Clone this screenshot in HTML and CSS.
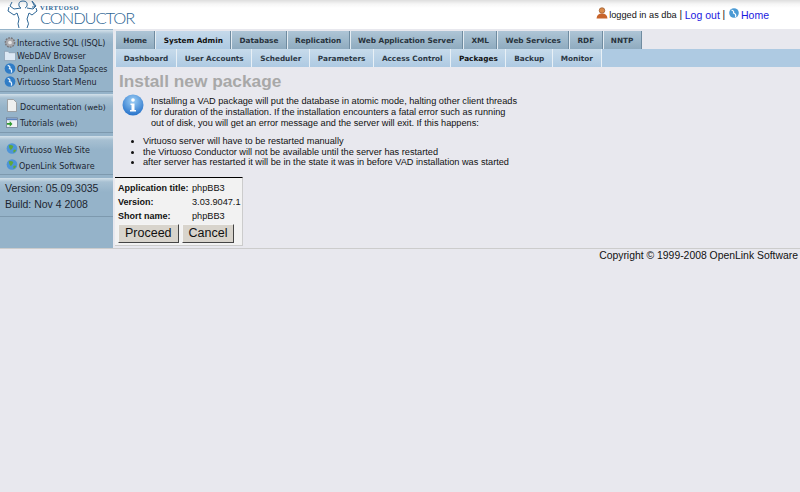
FILE: index.html
```html
<!DOCTYPE html>
<html lang="en">
<head>
<meta charset="utf-8">
<title>Virtuoso Conductor</title>
<link rel="stylesheet" href="styles.css">
</head>
<body>
<header class="top">
  <div class="logo">
    <svg class="logo-man" width="32" height="29" viewBox="0 0 32 29"><g fill="none" stroke="#2f6796" stroke-width="1"><path d="M12 6 Q11 1 16 1 Q21 1 20 6 Q19 8 18 8"/><path d="M12 6 Q13 8 14 8 L7 9 L3 6 L5 2"/><path d="M20 8 L26 9 L29 6 L25 1 L28 7 L25 7"/><path d="M2 7 L1 11 L7 15 L10 13 L12 19 Q10 24 12 28"/><path d="M29 8 L30 11 L25 15 L22 13 L20 19 Q23 24 20 28"/></g></svg>
    <div class="logo-text"><span class="logo-small">VIRTUOSO</span><span class="logo-big">CONDUCTOR</span></div>
  </div>
  <div class="user">
    <svg class="ico-user" width="12" height="12" viewBox="0 0 12 12"><circle cx="6" cy="3.5" r="2.8" fill="#d98a4a" stroke="#8a4a1e" stroke-width=".6"/><path d="M0.5 11.500 Q1 6.500 6 6.500 Q11 6.500 11.500 11.500Z" fill="#c8642a"/></svg>
    <span class="user-text">logged in as dba</span><span class="sep"> | </span><a href="#">Log out</a><span class="sep"> | </span>
    <svg class="ico-home" width="12" height="11" viewBox="0 0 12 11"><circle cx="6" cy="5" r="4.800" fill="#4a9ad4"/><path d="M3.500 2 Q6.500 3 5.500 5 Q8.500 6 7.500 9" stroke="#fff" stroke-width="1.200" fill="none"/></svg>
    <a href="#">Home</a>
  </div>
</header>
<div class="frame">
  <nav class="side">
    <section class="side-box box-apps">
      <a class="side-link"><svg class="i" width="12" height="13" viewBox="0 0 13 13"><circle cx="6.500" cy="6.500" r="5" fill="#a9a9ad" stroke="#77777c" stroke-width="1.600" stroke-dasharray="2 1"/><circle cx="6.500" cy="6.500" r="2" fill="#e6e6e6"/></svg>Interactive SQL (ISQL)</a>
      <a class="side-link"><svg class="i" width="12" height="13" viewBox="0 0 13 13"><path d="M0.500 2h4l1 1.500h7V12H0.500z" fill="#dce8f4" stroke="#7f93a8" stroke-width=".7"/></svg>WebDAV Browser</a>
      <a class="side-link"><svg class="i" width="12" height="13" viewBox="0 0 13 13"><circle cx="6.500" cy="6.500" r="5.800" fill="#2f7cc6"/><path d="M4 3 Q7.500 4 6 6.500 Q9 7 8 11" stroke="#e8f4ff" stroke-width="1.400" fill="none"/></svg>OpenLink Data Spaces</a>
      <a class="side-link"><svg class="i" width="12" height="13" viewBox="0 0 13 13"><circle cx="6.500" cy="6.500" r="5.800" fill="#2f7cc6"/><path d="M4 3 Q7.500 4 6 6.500 Q9 7 8 11" stroke="#e8f4ff" stroke-width="1.400" fill="none"/></svg>Virtuoso Start Menu</a>
    </section>
    <section class="side-box box-docs">
      <a class="side-link wide"><svg class="i" width="12" height="13" viewBox="0 0 12 13"><path d="M1.500 0.500h6l3 3V12.500h-9z" fill="#eef0f0" stroke="#8a8a8a" stroke-width=".7"/></svg>Documentation&nbsp;<small>(web)</small></a>
      <a class="side-link wide"><svg class="i" width="12" height="13" viewBox="0 0 13 13"><rect x=".5" y="1.500" width="12" height="10.500" fill="#eef0f4" stroke="#5a6a80" stroke-width=".7"/><path d="M1 2h11v2H1z" fill="#5e84c0"/><path d="M1 7h3V5l3 3-3 3V9H1z" fill="#2f9a30"/></svg>Tutorials&nbsp;<small>(web)</small></a>
    </section>
    <section class="side-box box-sites">
      <a class="side-link"><svg class="i" width="12" height="13" viewBox="0 0 13 13"><circle cx="6.500" cy="6.500" r="5.800" fill="#4d94d8"/><path d="M3 3 Q6 2 8 4 Q7 7 5 8 Q3 6 3 3z M8 8 Q10 7 11 8 Q10 11 8 11z" fill="#5fa83c"/></svg>Virtuoso Web Site</a>
      <a class="side-link"><svg class="i" width="12" height="13" viewBox="0 0 13 13"><circle cx="6.500" cy="6.500" r="5.800" fill="#4d94d8"/><path d="M3 3 Q6 2 8 4 Q7 7 5 8 Q3 6 3 3z M8 8 Q10 7 11 8 Q10 11 8 11z" fill="#5fa83c"/></svg>OpenLink Software</a>
    </section>
    <section class="side-box box-ver">
      <div>Version: 05.09.3035</div>
      <div>Build: Nov 4 2008</div>
    </section>
  </nav>
  <main class="main">
    <div class="tabs">
      <a class="tab">Home</a><a class="tab on">System Admin</a><a class="tab">Database</a><a class="tab">Replication</a><a class="tab">Web Application Server</a><a class="tab">XML</a><a class="tab">Web Services</a><a class="tab">RDF</a><a class="tab">NNTP</a>
    </div>
    <div class="subs">
      <a class="sub">Dashboard</a><a class="sub">User Accounts</a><a class="sub">Scheduler</a><a class="sub">Parameters</a><a class="sub">Access Control</a><a class="sub on">Packages</a><a class="sub">Backup</a><a class="sub last">Monitor</a>
    </div>
    <div class="content">
      <h1>Install new package</h1>
      <div class="notice">
        <svg class="info" width="22" height="22" viewBox="0 0 22 22"><defs><radialGradient id="g" cx=".5" cy=".3" r=".8"><stop offset="0" stop-color="#9fd0f6"/><stop offset="1" stop-color="#1565c4"/></radialGradient></defs><circle cx="11" cy="11" r="10.500" fill="url(#g)"/><circle cx="11" cy="6" r="1.800" fill="#fff"/><path d="M8.500 9.500h4V16h1.500v1.500H8V16h1.500V11H8.500z" fill="#fff"/></svg>
        <p>Installing a VAD package will put the database in atomic mode, halting other client threads<br>for duration of the installation. If the installation encounters a fatal error such as running<br>out of disk, you will get an error message and the server will exit. If this happens:</p>
      </div>
      <ul class="points">
        <li>Virtuoso server will have to be restarted manually</li>
        <li>the Virtuoso Conductor will not be available until the server has restarted</li>
        <li>after server has restarted it will be in the state it was in before VAD installation was started</li>
      </ul>
      <div class="confirm">
        <div class="row"><b>Application title:</b><span>phpBB3</span></div>
        <div class="row"><b>Version:</b><span>3.03.9047.1</span></div>
        <div class="row"><b>Short name:</b><span>phpBB3</span></div>
        <div class="btns"><button class="btn" type="button">Proceed</button><button class="btn" type="button">Cancel</button></div>
      </div>
    </div>
  </main>
</div>
<footer class="foot">Copyright © 1999-2008 OpenLink Software</footer>
</body>
</html>
```
FILE: styles.css
```css
html, body { margin: 0; padding: 0; }
body { background: #e8e8ee; font-family: "Liberation Sans", Arial, sans-serif; font-size: 10px; color: #111; width: 800px; height: 492px; overflow: hidden; }
a { color: inherit; text-decoration: none; }
.top { height: 29px; background: linear-gradient(#dedede 0, #f6f6f6 4px, #fff 8px); display: flex; justify-content: space-between; align-items: flex-start; box-sizing: border-box; }
.logo { display: flex; padding-left: 7px; color: #2f6796; }
.logo-text { display: flex; flex-direction: column; margin-left: 1px; padding-top: 4px; }
.logo-small { font: bold 6.500px/7px "Liberation Serif", serif; letter-spacing: .6px; height: 7px; }
.logo-big { font: 300 16.500px/14px "Lato", sans-serif; letter-spacing: -1.100px; }
.user { display: flex; align-items: center; padding: 9px 31px 0 0; font-size: 10.500px; line-height: 12px; white-space: pre; }
.user a { color: #1a1ae0; }
.user-text { font-size: 9.200px; }
.sep { font-size: 10px; }
.ico-user { margin-right: 1px; margin-top: -4px; }
.ico-home { margin-right: 1px; margin-top: -4px; }
.frame { display: flex; height: 219px; }
.side { width: 113px; background: #95b3c9; flex: none; margin-right: 2px; padding-top: 1px; box-sizing: border-box; }
.side-box { border-bottom: 1px solid #7d99ae; box-sizing: border-box; background: linear-gradient(#d3e1ea, #a7c0d2 4px, #95b3c9 14px); font: 8px/13px "DejaVu Sans", Verdana, sans-serif; color: #1c2530; white-space: nowrap; }
.side-link { display: flex; align-items: center; height: 13px; }
.i { flex: none; margin-right: 1px; margin-top: -3px; }
.box-apps { height: 62px; padding: 7px 0 0 4px; }
.box-docs { height: 39px; padding: 5px 0 0 6px; margin-top: 2px; }
.wide { height: 16.500px; }
.wide .i { margin-right: 2px; }
small { font-size: 7.500px; }
.box-sites { height: 39px; padding: 6px 0 0 6px; margin-top: 3px; }
.box-sites .side-link { height: 16px; }
.box-ver { height: 39px; padding: 2px 0 0 5px; margin-top: 3px; font: 10.500px/16px "Liberation Sans", sans-serif; }
.main { flex: 1; min-width: 0; }
.tabs { display: flex; height: 20px; padding-top: 2px; box-sizing: border-box; }
.tab { font: bold 7.300px/19px "DejaVu Sans", Verdana, sans-serif; padding: 0 7.350px; height: 18px; background: linear-gradient(#aec5d6, #8fabbf); color: #27323c; border-left: 1px solid #e4ecf2; border-right: 1px solid #6f8ba0; white-space: nowrap; }
.tab.on { background: linear-gradient(#c5d9ea, #aecae2); color: #111; }
.subs { display: flex; height: 18px; background: #aecae2; }
.sub { font: bold 7.300px/20px "DejaVu Sans", Verdana, sans-serif; padding: 0 7.750px; color: #2c3844; background: linear-gradient(#c7dbeb, #aecae2); border-left: 1px solid #e8f0f6; white-space: nowrap; }
.sub.on { color: #111; }
.sub.last { border-right: 1px solid #e8f0f6; }
.content { padding: 4px 0 0 4px; }
h1 { margin: 0; font: bold 17.300px/20px "Liberation Sans", sans-serif; color: #a8a8a8; }
.notice { display: flex; margin: 3px 0 0 3px; }
.info { flex: none; margin: 0 7px 0 0; }
.notice p { margin: 2px 0 0; font-size: 9.200px; line-height: 11px; }
.points { margin: 7px 0 0; padding: 0 0 0 24px; font-size: 9.200px; line-height: 10.500px; }
.confirm { margin-left: -4px; margin-top: 9px; width: 128px; height: 69px; box-sizing: border-box; border-top: 1px solid #000; border-right: 1px solid #ccc; border-bottom: 1px solid #ccc; background: #f2f2f2; padding: 4px 0 0 3px; font-size: 9.200px; }
.row { display: flex; height: 14px; line-height: 13px; white-space: nowrap; }
.row b { width: 74px; flex: none; font-size: 9px; }
.btns { display: flex; gap: 3px; margin-top: 0; }
.btn { font: 12.500px/14px "Liberation Sans", sans-serif; height: 19px; padding: 0 6px; background: #d8d4cc; border: 1px solid; border-color: #f4f4f4 #444 #444 #f4f4f4; color: #111; }
.foot { border-top: 1px solid #ccc; text-align: right; padding: 0 2px 0 0; font-size: 10.400px; line-height: 13px; }
```
